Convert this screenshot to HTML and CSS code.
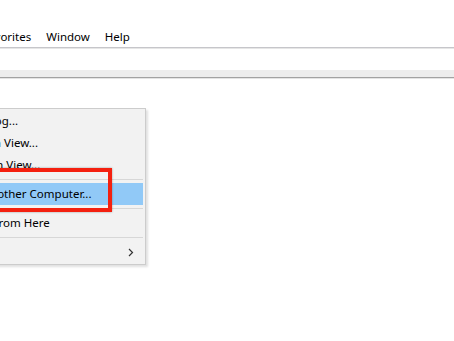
FILE: index.html
```
<!DOCTYPE html>
<html>
<head>
<meta charset="utf-8">
<link rel="stylesheet" href="styles.css">
</head>
<body>
<div class="window">
  <div class="titlespace"></div>
  <nav class="menubar">
    <span class="mi">File</span>
    <span class="mi">Action</span>
    <span class="mi">View</span>
    <span class="mi">Favorites</span>
    <span class="mi">Window</span>
    <span class="mi">Help</span>
  </nav>
  <div class="toolbar"></div>
  <div class="band"></div>
  <div class="content"></div>

  <div class="popup">
    <div class="item"><span class="label">Open Saved Log...</span></div>
    <div class="item"><span class="label">Create Custom View...</span></div>
    <div class="item"><span class="label">Import Custom View...</span></div>
    <div class="sep"></div>
    <div class="item hl"><span class="label">Connect to Another Computer...</span></div>
    <div class="sep"></div>
    <div class="item"><span class="label">New Window from Here</span></div>
    <div class="sep"></div>
    <div class="item"><span class="label">View</span>
      <svg class="arrow" width="6" height="9" viewBox="0 0 6 9"><path d="M1 1 L4.5 4.5 L1 8" fill="none" stroke="#333" stroke-width="1.2"/></svg>
    </div>
  </div>
  <div class="callout"></div>
</div>
</body>
</html>
```
FILE: styles.css
```
html, body {
  margin: 0;
  padding: 0;
  background: #fff;
  overflow: hidden;
  width: 454px;
  height: 341px;
}
.window {
  position: relative;
  width: 454px;
  height: 341px;
  font-family: "Noto Sans", sans-serif;
  font-size: 11.5px;
  color: #000;
  overflow: hidden;
}
.titlespace {
  height: 27px;
}
.menubar {
  display: flex;
  height: 20px;
  line-height: 20px;
  margin-left: -148px;
  border-bottom: 1px solid #c6c6ca;
  box-shadow: 0 1px 0 #e6e6e6;
  white-space: nowrap;
}
.mi {
  padding: 0 7.5px;
}
.toolbar {
  height: 22px;
}
.band {
  height: 7px;
  background: #ededed;
  border-bottom: 1px solid #a2a2a2;
  box-shadow: 0 1px 0 #e4e4e4;
}
.content {
  height: 260px;
}
.popup {
  position: absolute;
  left: -112px;
  top: 108px;
  width: 252px;
  padding: 1px 2px;
  background: #f2f2f2;
  border: 1px solid #cccccc;
  box-shadow: 2px 2px 2px rgba(0,0,0,0.12);
}
.item {
  position: relative;
  height: 22px;
  line-height: 22px;
  padding-left: 30px;
  white-space: nowrap;
}
.item.hl {
  background: #91c9f7;
}
.sep {
  height: 7px;
  display: flex;
  align-items: center;
  padding-left: 27px;
}
.sep::after {
  content: "";
  display: block;
  flex: 1;
  height: 1px;
  background: #d7d7d7;
}
.arrow {
  position: absolute;
  right: 9px;
  top: 7px;
}
.callout {
  position: absolute;
  left: -20px;
  top: 168px;
  width: 124px;
  height: 36px;
  border: 4px solid #f4200f;
  box-shadow: 0 0 2px rgba(0,0,0,0.35);
}
```
